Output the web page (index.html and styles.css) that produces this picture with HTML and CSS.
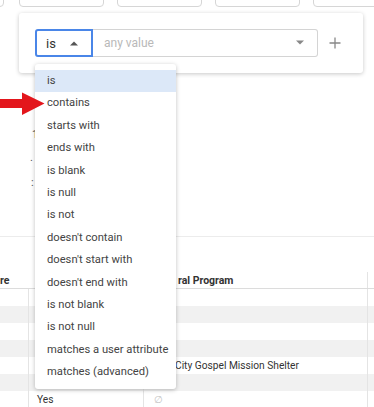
FILE: index.html
```html
<!DOCTYPE html>
<html>
<head>
<meta charset="utf-8">
<link rel="stylesheet" href="styles.css">
</head>
<body>
<div class="page">
  <div class="toolbar">
    <div class="tb-box tb-partial"></div>
    <div class="tb-box"></div>
    <div class="tb-box"></div>
    <div class="tb-box"></div>
    <div class="tb-box"></div>
  </div>

  <div class="bg">
    <div class="bg-line l2"><span>1</span></div>
    <div class="bg-line l3"><span>.</span></div>
    <div class="bg-line l4"><span>:</span></div>
  </div>

  <div class="divider"></div>

  <div class="table">
    <div class="row head">
      <div class="c c1">re</div>
      <div class="c c2"></div>
      <div class="c c3 hd3">ral Program</div>
      <div class="c c4"></div>
    </div>
    <div class="row"><div class="c c1"></div><div class="c c2"></div><div class="c c3"></div><div class="c c4"></div></div>
    <div class="row alt"><div class="c c1"></div><div class="c c2"></div><div class="c c3"></div><div class="c c4"></div></div>
    <div class="row"><div class="c c1"></div><div class="c c2"></div><div class="c c3"></div><div class="c c4"></div></div>
    <div class="row alt"><div class="c c1"></div><div class="c c2"></div><div class="c c3"></div><div class="c c4"></div></div>
    <div class="row"><div class="c c1"></div><div class="c c2"></div><div class="c c3 city">City Gospel Mission Shelter</div><div class="c c4"></div></div>
    <div class="row alt"><div class="c c1"></div><div class="c c2"></div><div class="c c3"></div><div class="c c4"></div></div>
    <div class="row"><div class="c c1"></div><div class="c c2">Yes</div><div class="c c3 null">∅</div><div class="c c4"></div></div>
  </div>

  <div class="popover">
    <div class="filter">
      <div class="select">
        <span>is</span>
        <svg class="caret" width="10" height="6" viewBox="0 0 10 6"><path d="M1 5.5 L5 1.5 L9 5.5 Z" fill="#555"/></svg>
      </div>
      <div class="value">
        <span class="ph">any value</span>
        <svg class="caret" width="10" height="6" viewBox="0 0 10 6"><path d="M1 0.5 L5 4.5 L9 0.5 Z" fill="#888"/></svg>
      </div>
      <svg class="plus" width="12" height="12" viewBox="0 0 12 12"><path d="M6 0.5 V11.5 M0.5 6 H11.5" stroke="#888" stroke-width="1.3"/></svg>
    </div>
  </div>

  <div class="menu">
    <div class="item active">is</div>
    <div class="item">contains</div>
    <div class="item">starts with</div>
    <div class="item">ends with</div>
    <div class="item">is blank</div>
    <div class="item">is null</div>
    <div class="item">is not</div>
    <div class="item">doesn't contain</div>
    <div class="item">doesn't start with</div>
    <div class="item">doesn't end with</div>
    <div class="item">is not blank</div>
    <div class="item">is not null</div>
    <div class="item">matches a user attribute</div>
    <div class="item">matches (advanced)</div>
  </div>

  <svg class="arrow" width="46" height="26" viewBox="0 0 46 26">
    <path d="M0 7 H22 V0.5 L44.5 11.5 L22 23 V16 H0 Z" fill="#e3161c"/>
  </svg>
</div>
</body>
</html>
```

FILE: styles.css
```css
* { box-sizing: border-box; }
html, body { margin: 0; padding: 0; background: #fff; }
body { font-family: Roboto, "Noto Sans", Arial, sans-serif; color: #333; }

.page {
  position: relative;
  width: 374px;
  height: 407px;
  overflow: hidden;
  background: #fff;
}

.toolbar {
  display: flex;
  gap: 13px;
  margin-top: -24px;
  margin-left: -81px;
}
.tb-box {
  flex: 0 0 85px;
  height: 31px;
  border: 1px solid #d6d6d6;
  border-radius: 4px;
  background: #fff;
}
.tb-partial { margin-right: 2px; }

.bg {
  height: 229px;
  padding-top: 109px;
  font-size: 11px;
  color: #555;
}
.l2 { height: 38px; line-height: 38px; padding-left: 32px; }
.l3 { height: 8px; line-height: 8px; padding-left: 30px; }
.l4 { height: 42px; line-height: 42px; padding-left: 31px; }

.divider {
  height: 1px;
  background: #ececec;
  margin-bottom: 35px;
}

.table { font-size: 10.2px; color: #333; }
.row { display: flex; height: 17px; }
.row.alt { background: #f1f1f1; }
.row.head { font-weight: 700; font-size: 10.5px; border-bottom: 1px solid #dcdcdc; height: 17px; }
.c { height: 100%; display: flex; align-items: center; white-space: nowrap; overflow: hidden; }
.c1 { width: 29px; justify-content: flex-end; padding-right: 9px; border-right: 1px solid #e4e4e4; }
.c2 { width: 115px; padding-left: 8px; border-right: 1px solid #e4e4e4; }
.c3 { width: 224px; padding-left: 4px; border-right: 1px solid #e4e4e4; }
.c4 { flex: 1; }
.head .c1 { justify-content: flex-start; padding-left: 0; }
.head .c1, .head .c2 { border-right-color: transparent; }
.hd3 { padding-left: 34px; }
.city { padding-left: 31px; }
.null { color: #c4c4c4; padding-left: 10px; font-size: 10px; }

.popover {
  position: absolute;
  top: 13px;
  left: 19px;
  width: 344px;
  height: 60px;
  background: #fff;
  border-radius: 3px;
  box-shadow: 0 1px 4px rgba(0,0,0,0.22);
  padding: 16px;
}
.filter { display: flex; align-items: center; height: 28px; }
.select {
  width: 58px;
  height: 28px;
  border: 2px solid #4a86e8;
  border-radius: 3px 0 0 3px;
  display: flex;
  align-items: center;
  justify-content: space-between;
  padding: 0 12px 0 9px;
  font-size: 13px;
  color: #333;
}
.value {
  width: 225px;
  height: 28px;
  border: 1px solid #d4d4d4;
  border-left: none;
  border-radius: 0 3px 3px 0;
  display: flex;
  align-items: center;
  justify-content: space-between;
  padding: 0 12px 0 11px;
  font-size: 12px;
}
.ph { color: #b9b9b9; }
.plus { margin-left: 11px; }

.menu {
  position: absolute;
  top: 64px;
  left: 35px;
  width: 141px;
  height: 325px;
  background: #fff;
  border-radius: 3px;
  box-shadow: 0 1px 4px rgba(0,0,0,0.25);
  padding: 6px 0;
  overflow: hidden;
}
.item {
  height: 22.4px;
  line-height: 22.4px;
  padding-left: 12px;
  font-size: 11.2px;
  color: #444;
  white-space: nowrap;
}
.item.active { background: #dce8f8; }

.arrow {
  position: absolute;
  top: 92px;
  left: 0;
}
```
